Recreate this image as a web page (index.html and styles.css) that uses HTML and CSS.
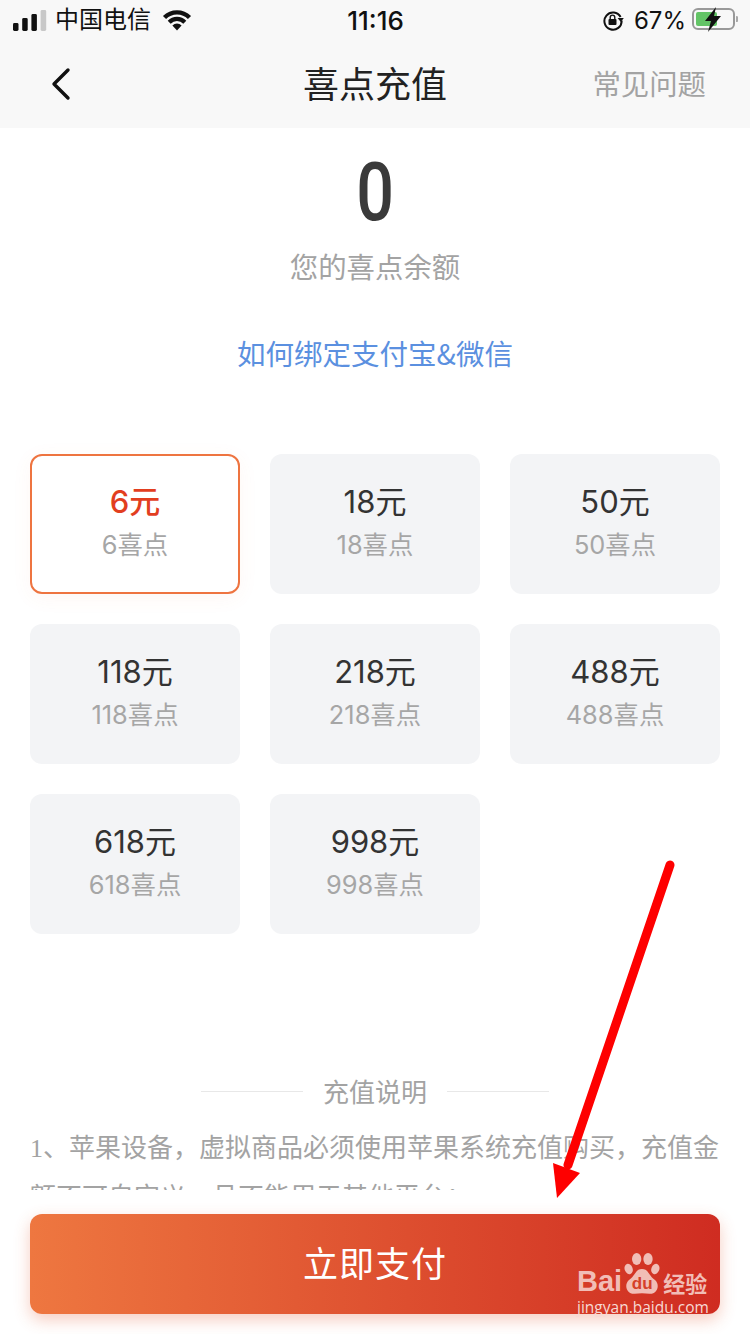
FILE: index.html
```html
<!DOCTYPE html>
<html lang="zh-CN">
<head>
  <meta charset="UTF-8" />
  <meta name="viewport" content="width=device-width, initial-scale=1" />
  <title>喜点充值</title>
  <link rel="stylesheet" href="styles.css">
</head>
<body>
  <div class="topbar">
    <div class="status">
      <div class="status-left">
        <svg class="signal" width="34" height="21" viewBox="0 0 34 21">
          <rect x="0" y="13" width="5.5" height="8" rx="1.4" fill="#111"/>
          <rect x="9.2" y="8" width="5.5" height="13" rx="1.4" fill="#111"/>
          <rect x="18.4" y="4" width="5.5" height="17" rx="1.4" fill="#111"/>
          <rect x="27.6" y="0" width="5.6" height="21" rx="1.4" fill="#c8c8c8"/>
        </svg>
        <span class="carrier">中国电信</span>
        <svg class="wifi" width="30" height="22" viewBox="0 0 30 22">
          <path d="M15 21.5 L10.4 16.4 A6.5 6.5 0 0 1 19.6 16.4 Z" fill="#111"/>
          <path d="M7.2 13.2 A11 11 0 0 1 22.8 13.2" fill="none" stroke="#111" stroke-width="4.2"/>
          <path d="M2.5 8.5 A17.7 17.7 0 0 1 27.5 8.5" fill="none" stroke="#111" stroke-width="4.4"/>
        </svg>
      </div>
      <div class="status-time">11:16</div>
      <div class="status-right">
        <svg class="lock" width="22" height="22" viewBox="0 0 22 22">
          <path d="M18.6 8 A8.6 8.6 0 1 0 19.6 11.5" fill="none" stroke="#111" stroke-width="2"/>
          <path d="M15.6 9 L21.8 9 L18.8 13 Z" fill="#111"/>
          <rect x="6.5" y="10" width="8" height="6" rx="1" fill="#111"/>
          <path d="M8.2 10 V8.4 A2.3 2.3 0 0 1 12.8 8.4 V10" fill="none" stroke="#111" stroke-width="1.4"/>
        </svg>
        <span class="battery-pct">67%</span>
        <svg class="battery" width="46" height="26" viewBox="0 0 46 26">
          <rect x="1" y="2" width="41" height="20" rx="5" fill="none" stroke="#999" stroke-width="2"/>
          <rect x="4" y="5" width="21" height="14" rx="2" fill="#63c466"/>
          <path d="M44 9 a3 3 0 0 1 0 6 z" fill="#a8a8a8"/>
          <path d="M24 0 L13 14 L19 14 L16 25 L29 9 L22 9 Z" fill="#111"/>
        </svg>
      </div>
    </div>
    <div class="navbar">
      <svg class="back" width="22" height="34" viewBox="0 0 22 34">
        <path d="M18 3 L4 17 L18 31" fill="none" stroke="#111" stroke-width="3.4" stroke-linecap="round" stroke-linejoin="round"/>
      </svg>
      <div class="navbar-title">喜点充值</div>
      <a class="navbar-link">常见问题</a>
    </div>
  </div>

  <div class="content">
    <div class="balance">
      <div class="balance-num">0</div>
      <div class="balance-label">您的喜点余额</div>
    </div>
    <a class="bind-link">如何绑定支付宝&amp;微信</a>

    <div class="plans">
      <div class="plan active">
        <div class="plan-price">6元</div>
        <div class="plan-points">6喜点</div>
      </div>
      <div class="plan">
        <div class="plan-price">18元</div>
        <div class="plan-points">18喜点</div>
      </div>
      <div class="plan">
        <div class="plan-price">50元</div>
        <div class="plan-points">50喜点</div>
      </div>
      <div class="plan">
        <div class="plan-price">118元</div>
        <div class="plan-points">118喜点</div>
      </div>
      <div class="plan">
        <div class="plan-price">218元</div>
        <div class="plan-points">218喜点</div>
      </div>
      <div class="plan">
        <div class="plan-price">488元</div>
        <div class="plan-points">488喜点</div>
      </div>
      <div class="plan">
        <div class="plan-price">618元</div>
        <div class="plan-points">618喜点</div>
      </div>
      <div class="plan">
        <div class="plan-price">998元</div>
        <div class="plan-points">998喜点</div>
      </div>
    </div>

    <div class="notes-title"><span>充值说明</span></div>
    <p class="notes-text"><span class="serif-num">1</span>、苹果设备&#xFF0C;虚拟商品必须使用苹果系统充值购买&#xFF0C;充值金额不可自定义&#xFF0C;且不能用于其他平台&#xFF1B;</p>
  </div>

  <div class="footer">
    <button class="pay-btn">立即支付</button>
  </div>

  <!-- red arrow drawn over the screenshot -->
  <svg class="arrow" width="130" height="345" viewBox="0 0 130 345">
    <path d="M120 5 L18 305" fill="none" stroke="#fe0000" stroke-width="9" stroke-linecap="round"/>
    <path d="M3 303 L30 313 L7 338 Z" fill="#fe0000"/>
  </svg>

  <div class="watermark">
    <div class="wm-logo">
      <span class="wm-bai">Bai</span>
      <span class="wm-paw">
        <svg width="36" height="42" viewBox="0 0 54 63">
          <ellipse cx="19" cy="9" rx="7" ry="9" fill="#f1bdb6"/>
          <ellipse cx="36" cy="9" rx="7" ry="9" fill="#f1bdb6"/>
          <ellipse cx="7" cy="24" rx="6" ry="8" fill="#f1bdb6" transform="rotate(-20 7 24)"/>
          <ellipse cx="47" cy="24" rx="6" ry="8" fill="#f1bdb6" transform="rotate(20 47 24)"/>
          <path d="M27 24 C37 24 37 34 46 40 C55 47 50 62 38 61 C31 60 23 60 16 61 C4 62 -1 47 8 40 C17 34 17 24 27 24 Z" fill="#f1bdb6"/>
        </svg>
        <span class="wm-du">du</span>
      </span>
      <span class="wm-cn">经验</span>
    </div>
    <div class="wm-url">jingyan.baidu.com</div>
  </div>
</body>
</html>
```

FILE: styles.css
```css
* {
  box-sizing: border-box;
  margin: 0;
  padding: 0;
  font-family: "Noto Sans CJK SC", "Noto Sans", sans-serif;
}
html, body {
  height: 100%;
}
body {
  position: relative;
  width: 750px;
  height: 1334px;
  background: #fff;
  color: #333;
  overflow: hidden;
  display: flex;
  flex-direction: column;
}
.topbar {
  background: #f8f8f8;
  height: 128px;
  flex-shrink: 0;
}
.status {
  display: flex;
  align-items: center;
  justify-content: space-between;
  height: 42px;
  padding: 0 12px 2px 13px;
  color: #111;
}
.status-left,
.status-right {
  display: flex;
  align-items: center;
  width: 260px;
}
.status-right {
  justify-content: flex-end;
}
.signal {
  margin-right: 8px;
}
.carrier {
  font-size: 24px;
  margin: 0 11px 5px 0;
}
.status-time {
  font-family: Inter, sans-serif;
  font-size: 26px;
  font-weight: 500;
}
.battery-pct {
  font-family: Inter, sans-serif;
  font-size: 24px;
  margin: 0 6px 0 10px;
}
.navbar {
  display: flex;
  align-items: center;
  justify-content: space-between;
  height: 86px;
  padding: 0 44px 0 50px;
  position: relative;
}
.back {
  margin-top: -2px;
}
.navbar-title {
  position: absolute;
  left: 0;
  right: 0;
  text-align: center;
  font-size: 36px;
  line-height: 50px;
  margin-top: -6px;
  color: #222;
}
.navbar-link {
  font-size: 28.4px;
  line-height: 40px;
  margin-top: -4px;
  color: #a3a3a3;
}
.content {
  flex: 1;
  min-height: 0;
  max-height: 1062px;
  overflow: hidden;
  padding: 0 30px;
  display: flex;
  flex-direction: column;
  align-items: center;
}
.balance {
  text-align: center;
}
.balance-num {
  font-family: Roboto, sans-serif;
  font-size: 81px;
  font-weight: 500;
  line-height: 90px;
  margin-top: 20px;
  color: #3a3a3a;
  transform: scaleX(0.82);
}
.balance-label {
  font-size: 28.4px;
  line-height: 40px;
  margin-top: 8px;
  color: #a3a3a3;
}
.bind-link {
  font-size: 28.5px;
  line-height: 40px;
  margin-top: 47px;
  color: #5b90e0;
}
.plans {
  width: 100%;
  margin-top: 81px;
  display: grid;
  grid-template-columns: repeat(3, 210px);
  grid-auto-rows: 140px;
  gap: 30px;
}
.plan {
  background: #f3f4f6;
  border-radius: 12px;
  display: flex;
  flex-direction: column;
  align-items: center;
  justify-content: center;
  padding-bottom: 2px;
}
.plan.active {
  background: #fff;
  border: 2px solid #ee7440;
  box-shadow: 0 4px 20px rgba(238, 116, 64, 0.06);
}
.plan-price {
  font-family: Inter, "Noto Sans CJK SC", sans-serif;
  font-size: 31px;
  line-height: 42px;
  color: #333;
}
.plan.active .plan-price {
  color: #e23e1f;
  font-weight: 500;
}
.plan-points {
  font-family: Inter, "Noto Sans CJK SC", sans-serif;
  font-size: 25.4px;
  line-height: 42px;
  margin-top: 1px;
  color: #a6a6a6;
}
.notes-title {
  margin-top: 137px;
  width: 348px;
  display: flex;
  align-items: center;
  gap: 20px;
  font-size: 26px;
  line-height: 40px;
  color: #a3a3a3;
}
.notes-title::before,
.notes-title::after {
  content: "";
  flex: 1;
  height: 1px;
  background: #e8e8e8;
}
.notes-text {
  width: 100%;
  margin-top: 12px;
  font-size: 26px;
  line-height: 46px;
  color: #a3a3a3;
}
.serif-num {
  font-family: "Liberation Serif", serif;
}
.footer {
  height: 144px;
  flex-shrink: 0;
  padding: 24px 30px 0;
  background: #fff;
}
.pay-btn {
  display: block;
  width: 100%;
  height: 100px;
  border: none;
  border-radius: 12px;
  padding-bottom: 6px;
  background: linear-gradient(90deg, #ee7740 0%, #cf2c21 100%);
  box-shadow: 0 6px 16px rgba(226, 90, 50, 0.3);
  color: #fff;
  font-size: 35px;
  letter-spacing: 1px;
}
.arrow {
  position: absolute;
  left: 550px;
  top: 860px;
}
.watermark {
  position: absolute;
  left: 577px;
  top: 1253px;
  width: 134px;
  color: #f1bdb6;
}
.wm-logo {
  display: flex;
  align-items: flex-end;
  height: 42px;
}
.wm-bai {
  font-family: "Liberation Sans", sans-serif;
  font-weight: 700;
  font-size: 29px;
  line-height: 27px;
  margin-right: 2px;
}
.wm-paw {
  position: relative;
  width: 36px;
  height: 42px;
  margin-right: 3px;
  flex-shrink: 0;
}
.wm-du {
  position: absolute;
  left: 0;
  right: 0;
  bottom: 2px;
  text-align: center;
  font-family: "Liberation Sans", sans-serif;
  font-weight: 700;
  font-size: 17px;
  line-height: 18px;
  color: #d5402a;
}
.wm-cn {
  font-size: 22px;
  font-weight: 700;
  line-height: 26px;
}
.wm-url {
  font-family: "Open Sans", sans-serif;
  font-size: 15.5px;
  line-height: 20px;
  margin-top: 2px;
  color: #f7d9d4;
  white-space: nowrap;
}
```
